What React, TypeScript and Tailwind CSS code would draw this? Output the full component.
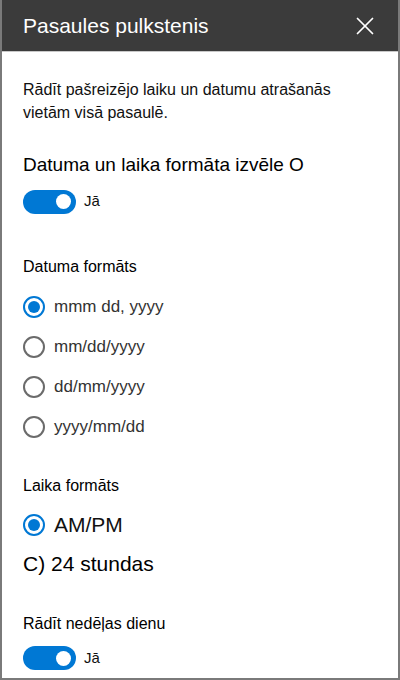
import { X } from 'lucide-react';

const font = { fontFamily: '"Liberation Sans", Arial, sans-serif' };

const Toggle = ({ label }: { label: string }) => (
  <div className="flex items-center gap-[8px]">
    <div className="w-[53px] h-[24px] rounded-full bg-[#0078d4] flex items-center justify-end pr-[5px]">
      <div className="w-[15px] h-[15px] rounded-full bg-white"></div>
    </div>
    <span className="text-[15px] text-[#111]">{label}</span>
  </div>
);

const Radio = ({ label, checked, big }: { label: string; checked?: boolean; big?: boolean }) => (
  <div className="flex items-center gap-[9px] h-[40px]">
    <div
      className={`w-[22px] h-[22px] rounded-full border-2 flex items-center justify-center ${
        checked ? 'border-[#0078d4]' : 'border-[#6b6b6b]'
      }`}
    >
      {checked && <div className="w-[12px] h-[12px] rounded-full bg-[#0078d4]"></div>}
    </div>
    <span className={big ? 'text-[21px] text-[#111]' : 'text-[17px] text-[#333]'}>{label}</span>
  </div>
);

const App = () => {
  return (
    <div className="w-[400px] h-[680px] bg-white border-x-2 border-b-2 border-[#7a7a7a] flex flex-col overflow-hidden" style={font}>
      {/* Header */}
      <div className="h-[52px] bg-[#3b3b3b] border-b border-[#c8c8c8] flex items-center justify-between pl-[21px] pr-[18px] shrink-0">
        <span className="text-[21px] text-white">Pasaules pulkstenis</span>
        <X size={30} strokeWidth={1.4} className="text-white" />
      </div>

      <div className="px-[21px] pt-[26px] flex flex-col">
        <p className="text-[16px] leading-[23px] text-[#111]">
          Rādīt pašreizējo laiku un datumu atrašanās vietām visā pasaulē.
        </p>

        <div className="mt-[27px] text-[19px] text-black">Datuma un laika formāta izvēle O</div>
        <div className="mt-[10px]">
          <Toggle label="Jā" />
        </div>

        <div className="mt-[41px] text-[16px] text-black">Datuma formāts</div>
        <div className="mt-[8px] flex flex-col">
          <Radio label="mmm dd, yyyy" checked />
          <Radio label="mm/dd/yyyy" />
          <Radio label="dd/mm/yyyy" />
          <Radio label="yyyy/mm/dd" />
        </div>

        <div className="mt-[27px] text-[16px] text-black">Laika formāts</div>
        <div className="mt-[7px]">
          <Radio label="AM/PM" checked big />
        </div>
        <div className="mt-[3px] text-[21px] text-black">C) 24 stundas</div>

        <div className="mt-[33px] text-[16px] text-black">Rādīt nedēļas dienu</div>
        <div className="mt-[10px]">
          <Toggle label="Jā" />
        </div>
      </div>
    </div>
  );
};

export default App;
